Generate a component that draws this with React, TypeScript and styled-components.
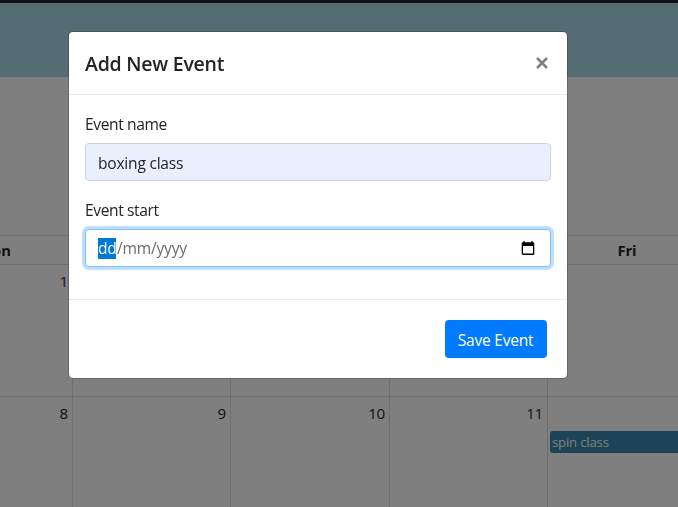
import React from "react";
import styled, { createGlobalStyle } from "styled-components";

const GlobalStyle = createGlobalStyle`
  *, *::before, *::after { box-sizing: border-box; }
  html, body { margin: 0; height: 100%; overflow: hidden; }
  body {
    background: #fff;
    color: #212529;
    font: 400 15.6px/24px "Open Sans", "Noto Sans", sans-serif;
    letter-spacing: -0.34px;
  }
`;

const Page = styled.div`
  display: flex;
  flex-direction: column;
  width: 678px;
  height: 507px;
  overflow: hidden;
`;

const TopBar = styled.div`
  flex: 0 0 3px;
  background: #23232f;
`;

const Banner = styled.div`
  flex: 0 0 74px;
  background: lightblue;
`;

const Calendar = styled.div`
  flex: none;
  width: 952px;
  margin: 158px 0 0 -87px;
  border-top: 1px solid #ddd;
`;

const Week = styled.div<{ $height: number }>`
  display: grid;
  grid-template-columns: 160px 158px 159px 158px 159px 158px;
  height: ${(p) => p.$height}px;
  border-bottom: 1px solid #ddd;
`;

const DayName = styled.div`
  padding-right: 1px;
  text-align: center;
  font-weight: 700;
  font-size: 14.8px;
  line-height: 28px;
  letter-spacing: -0.1px;
  color: #212529;

  &:first-child {
    padding: 0 0 0 3px;
  }
`;

const Day = styled.div`
  border-right: 1px solid #ddd;
`;

const DayNumber = styled.div<{ $linked?: boolean }>`
  padding: 4px 4px 0 0;
  text-align: right;
  font-size: 15.2px;
  letter-spacing: -0.25px;
  color: ${(p) => (p.$linked ? "#3c1446" : "#212529")};
`;

const CalendarEvent = styled.div`
  height: 22px;
  margin: 6px 0 0 2px;
  padding: 0 2px;
  border-radius: 3px;
  background: #3a87ad;
  color: #fff;
  font-size: 13.2px;
  line-height: 22px;
  letter-spacing: -0.2px;
`;

const Backdrop = styled.div`
  position: fixed;
  inset: 0;
  padding: 31px 0 0 68px;
  background: rgba(0, 0, 0, 0.5);
`;

const Dialog = styled.section`
  width: 500px;
  border: 1px solid rgba(0, 0, 0, 0.2);
  border-radius: 5px;
  background: #fff;
  background-clip: padding-box;
`;

const DialogHeader = styled.header`
  display: flex;
  justify-content: space-between;
  height: 63px;
  padding: 16px;
  border-bottom: 1px solid #e9ecef;
`;

const Title = styled.h5`
  margin: 0;
  font-size: 19.5px;
  font-weight: 600;
  line-height: 32px;
  letter-spacing: -0.24px;
`;

const CloseButton = styled.button`
  display: flex;
  width: 18px;
  height: 30px;
  padding: 9px 0 0 3px;
  border: 0;
  background: none;
`;

const DialogBody = styled.div`
  padding: 16px;
`;

const Field = styled.div`
  margin-bottom: 16px;
`;

const Label = styled.div`
  height: 24px;
  margin-bottom: 8px;
  line-height: 27px;
  letter-spacing: -0.4px;
`;

const Control = styled.div<{ $focused?: boolean }>`
  display: flex;
  align-items: center;
  height: 38px;
  padding: ${(p) => (p.$focused ? "0 15px 0 12px" : "2px 12px 0")};
  border: 1px solid ${(p) => (p.$focused ? "#80bdff" : "#ced4da")};
  border-radius: 4px;
  background: ${(p) => (p.$focused ? "#fff" : "#e8f0fe")};
  color: ${(p) => (p.$focused ? "#6c6c6c" : "#212529")};
  letter-spacing: -0.24px;
  box-shadow: ${(p) => (p.$focused ? "0 0 0 3px rgba(0, 123, 255, 0.25)" : "none")};
`;

const DateText = styled.span`
  flex: 1;
  display: flex;
  align-items: center;
  line-height: 21px;
  letter-spacing: -0.2px;
`;

const Selected = styled.span`
  width: 18px;
  margin-right: 1px;
  letter-spacing: -0.4px;
  background: #0078d7;
  color: #fff;
`;

const DialogFooter = styled.footer`
  display: flex;
  justify-content: flex-end;
  padding: 20px;
  border-top: 1px solid #e9ecef;
`;

const SaveButton = styled.button`
  width: 102px;
  height: 38px;
  padding: 2px 1px 0 0;
  border: 0;
  border-radius: 4px;
  background: #007bff;
  color: #fff;
  font: inherit;
  letter-spacing: -0.25px;
`;

const CloseIcon = () => (
  <svg width="12" height="12" viewBox="0 0 12 12">
    <path d="M1 1 11 11M11 1 1 11" fill="none" stroke="#7f7f7f" strokeWidth="2.5" />
  </svg>
);

const CalendarIcon = () => (
  <svg width="14" height="15" viewBox="0 0 14 15">
    <path
      d="M2.4 0h1.3v1.2h6.6V0h1.3v1.2h.5q1.2 0 1.2 1.2v10.3q0 1.2-1.2 1.2H1.9Q.7 13.7.7 12.500V2.400Q.7 1.200 1.900 1.200h.5ZM2 5v7.600h10V5Z"
      fill="#000"
      fillRule="evenodd"
    />
  </svg>
);

export default function App() {
  return (
    <>
      <GlobalStyle />
      <Page>
        <TopBar />
        <Banner />
        <Calendar>
          <Week $height={29}>
            {["Mon", "Tue", "Wed", "Thu"].map((name, i) => (
              <DayName key={name}>{i === 0 ? name : ""}</DayName>
            ))}
            <DayName>Fri</DayName>
            <DayName />
          </Week>
          <Week $height={132}>
            {[1, 2, 3, 4].map((n) => (
              <Day key={n}>
                <DayNumber $linked={n === 1}>{n}</DayNumber>
              </Day>
            ))}
            <Day />
          </Week>
          <Week $height={132}>
            {[8, 9, 10, 11].map((n) => (
              <Day key={n}>
                <DayNumber>{n}</DayNumber>
              </Day>
            ))}
            <Day>
              <DayNumber>&nbsp;</DayNumber>
              <CalendarEvent>spin class</CalendarEvent>
            </Day>
          </Week>
        </Calendar>
      </Page>
      <Backdrop>
        <Dialog role="dialog" aria-label="Add New Event">
          <DialogHeader>
            <Title>Add New Event</Title>
            <CloseButton aria-label="Close">
              <CloseIcon />
            </CloseButton>
          </DialogHeader>
          <DialogBody>
            <Field>
              <Label>Event name</Label>
              <Control>boxing class</Control>
            </Field>
            <Field>
              <Label>Event start</Label>
              <Control $focused>
                <DateText>
                  <Selected>dd</Selected>/mm/yyyy
                </DateText>
                <CalendarIcon />
              </Control>
            </Field>
          </DialogBody>
          <DialogFooter>
            <SaveButton>Save Event</SaveButton>
          </DialogFooter>
        </Dialog>
      </Backdrop>
    </>
  );
}
